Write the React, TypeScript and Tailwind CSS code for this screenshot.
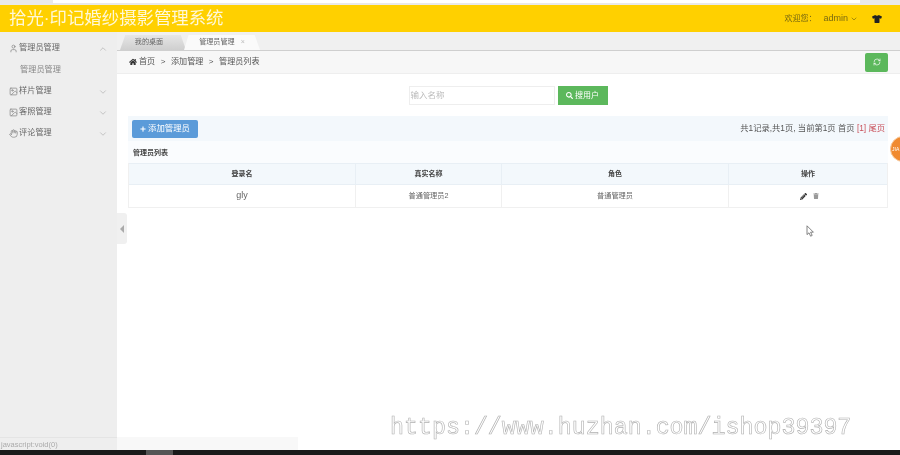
import { FaHome, FaPencilAlt, FaPlus, FaSearch, FaTrash, FaTshirt } from "react-icons/fa";
import { ChevronDown, ChevronUp, Hand, Image, RefreshCw, User } from "lucide-react";

const font = "font-['Liberation_Sans','Noto_Sans_CJK_SC',sans-serif]";

const columns = [
  { title: "登录名", width: "w-[227px]" },
  { title: "真实名称", width: "w-[146px]" },
  { title: "角色", width: "w-[227px]" },
  { title: "操作", width: "w-[158px]" },
];

function MenuItem({ icon, label, open }: { icon: React.ReactNode; label: string; open?: boolean }) {
  return (
    <div className="h-[21px] flex items-center pl-[8px] pr-[9px] text-[8.2px] text-[#666]">
      <span className="w-[11px] flex justify-center text-[#888]">{icon}</span>
      <span className="flex-1">{label}</span>
      {open ? (
        <ChevronUp size={10} className="text-[#bbb]" />
      ) : (
        <ChevronDown size={10} className="text-[#bbb]" />
      )}
    </div>
  );
}

function Sidebar() {
  return (
    <aside className="w-[117px] shrink-0 bg-[#eeeeee] flex flex-col pt-[6px]">
      <MenuItem icon={<User size={9} />} label="管理员管理" open />
      <div className="h-[22px] flex items-center pl-[20px] text-[8.2px] text-[#888]">管理员管理</div>
      <MenuItem icon={<Image size={9} />} label="样片管理" />
      <MenuItem icon={<Image size={9} />} label="客照管理" />
      <MenuItem icon={<Hand size={9} />} label="评论管理" />
      <div className="mt-auto h-[13px] border-t border-[#e4e4e4] pl-[1px] text-[7.5px] leading-[13px] text-[#aaa]">
        javascript:void(0)
      </div>
    </aside>
  );
}

function Tabs() {
  return (
    <div className="h-[19px] bg-[#f0f0f0] border-b border-[#cfcfcf] flex items-end pl-[3px] text-[7.1px] text-[#666]">
      <div className="h-[15px] w-[66px] pr-[8px] flex items-center justify-center bg-linear-to-b from-[#e6e6e6] to-[#cfcfcf] [clip-path:polygon(8%_0,92%_0,100%_100%,0_100%)]">
        我的桌面
      </div>
      <div className="h-[15px] w-[76px] -ml-[2px] flex items-center justify-center gap-[6px] bg-[#fafafa] [clip-path:polygon(6%_0,93%_0,100%_100%,0_100%)]">
        <span>管理员管理</span>
        <span className="text-[#bbb]">×</span>
      </div>
    </div>
  );
}

function Breadcrumb() {
  return (
    <div className="h-[23px] bg-[#f7f7f7] border-b border-[#eeeeee] flex items-center pl-[12px] pr-[12px] text-[8.1px] text-[#555]">
      <FaHome size={8} className="text-[#333] mr-[2px]" />
      <span className="pt-[1px]">首页</span>
      <span className="mx-[5.5px] pt-[1px]">&gt;</span>
      <span className="pt-[1px]">添加管理</span>
      <span className="mx-[5.5px] pt-[1px]">&gt;</span>
      <span className="pt-[1px]">管理员列表</span>
      <button className="ml-auto w-[23px] h-[19px] rounded-[2px] bg-[#5cb85c] flex items-center justify-center">
        <RefreshCw size={8} className="text-white" />
      </button>
    </div>
  );
}

function SearchRow() {
  return (
    <div className="mt-[12px] h-[19px] flex justify-center gap-[3px] pr-[1px]">
      <div className="w-[146px] border border-[#eeeeee] flex items-center pl-[1px] text-[8.5px] text-[#bbb]">
        输入名称
      </div>
      <button className="w-[50px] bg-[#5cb85c] flex items-center justify-center gap-[2px] text-[8px] text-white">
        <FaSearch size={7} />
        搜用户
      </button>
    </div>
  );
}

function Toolbar() {
  return (
    <div className="mt-[11px] h-[25px] bg-[#f3f8fc] flex items-center pl-[4px] pr-[3px]">
      <button className="w-[66px] h-[18px] rounded-[2px] bg-[#5b9bd9] flex items-center justify-center gap-[2px] text-[8.4px] text-white">
        <FaPlus size={6} />
        添加管理员
      </button>
      <div className="ml-auto text-[8.3px] text-[#555]">
        共1记录,共1页, 当前第1页 首页 <span className="text-[#c9505a]">[1] 尾页</span>
      </div>
    </div>
  );
}

function AdminTable() {
  return (
    <div className="border-b border-x border-[#f0f0f0]">
      <div className="flex h-[22px] bg-[#f3f8fc] border-y border-[#e8eff5] text-[7px] font-bold text-[#444]">
        {columns.map((col) => (
          <div key={col.title} className={`${col.width} shrink-0 flex items-center justify-center border-r border-[#e8eff5] last:border-r-0`}>
            {col.title}
          </div>
        ))}
      </div>
      <div className="flex h-[22px] text-[7.2px] text-[#666]">
        <div className="w-[227px] shrink-0 flex items-center justify-center border-r border-[#f0f0f0] text-[9px]">gly</div>
        <div className="w-[146px] shrink-0 flex items-center justify-center border-r border-[#f0f0f0]">普通管理员2</div>
        <div className="w-[227px] shrink-0 flex items-center justify-center border-r border-[#f0f0f0]">普通管理员</div>
        <div className="w-[158px] shrink-0 flex items-center justify-center gap-[6px] pl-[2px]">
          <FaPencilAlt size={7} className="text-[#333]" />
          <FaTrash size={6} className="text-[#999]" />
        </div>
      </div>
    </div>
  );
}

export default function App() {
  return (
    <div className={`${font} relative w-[900px] h-[455px] overflow-hidden bg-white flex flex-col blur-[0.5px]`}>
      <div className="h-[5px] flex bg-[#e9e9e9]">
        <div className="ml-[53px] w-[807px] h-[3px] bg-white" />
      </div>
      <header className="h-[27px] bg-[#ffd000] flex items-center pl-[9px] pr-[18px]">
        <h1 className="text-[17.4px] text-[#fff8d8]">拾光·印记婚纱摄影管理系统</h1>
        <div className="ml-auto flex items-center text-[8px] text-[#7a6a10]">
          <span>欢迎您：</span>
          <span className="ml-[7px] text-[9px]">admin</span>
          <ChevronDown size={8} className="ml-[2px]" />
          <FaTshirt size={10} className="ml-[14px] text-[#222]" />
        </div>
      </header>

      <div className="flex-1 flex min-h-0">
        <Sidebar />
        <main className="flex-1 flex flex-col min-w-0">
          <Tabs />
          <Breadcrumb />
          <SearchRow />
          <div className="ml-[11px] mr-[12px]">
            <Toolbar />
            <div className="h-[22px] bg-[#fafcfe] flex items-center pl-[5px] pt-[2px] text-[7px] font-bold text-[#444]">
              管理员列表
            </div>
            <AdminTable />
          </div>
          <div className="mt-auto w-[181px] h-[13px] bg-[#f8f8f8]" />
        </main>
      </div>

      <div className="h-[5px] bg-[#1a1a1a] flex">
        <div className="ml-[146px] w-[27px] bg-[#555]" />
      </div>

      {/* overlays */}
      <div className="absolute left-[117px] top-[213px] w-[10px] h-[31px] bg-[#f0f0f0] rounded-r-[3px] flex items-center justify-center">
        <span className="w-0 h-0 border-y-[4px] border-y-transparent border-r-[4px] border-r-[#aaa]" />
      </div>
      <div className="absolute left-[890px] top-[136px] w-[26px] h-[26px] rounded-full bg-[#f08a30] border border-[#f8c99c] text-[5px] leading-[24px] pl-[1px] text-white">
        JIA
      </div>
      <svg className="absolute left-[806px] top-[225px]" width="9" height="12" viewBox="0 0 9 12">
        <path d="M1 0.8V9.6L3 7.8L4.6 11.2L6.2 10.4L4.6 7.2H7.4Z" fill="#fff" stroke="#666" strokeWidth="0.8" />
      </svg>
      <div className="absolute left-[390px] top-[413px] font-['Liberation_Mono',monospace] text-[23.3px] leading-[30px] text-white [-webkit-text-stroke:0.6px_#b0b0b0]">
        https://www.huzhan.com/ishop39397
      </div>
    </div>
  );
}
